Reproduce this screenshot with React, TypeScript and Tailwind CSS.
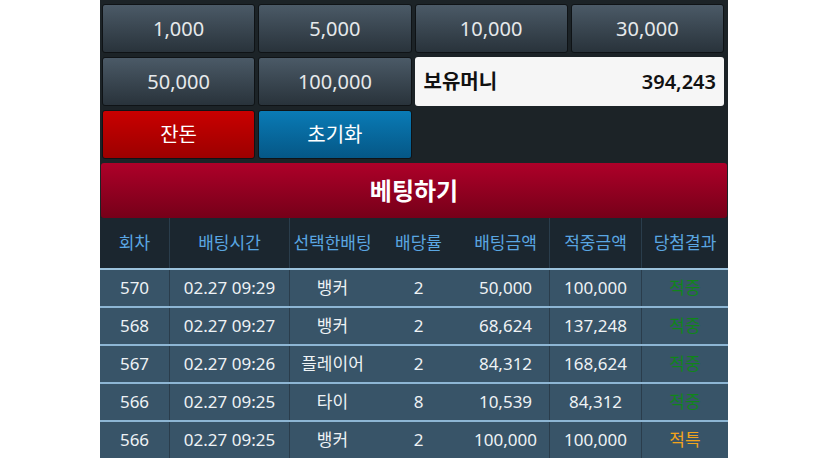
import React from "react";

type Row = {
  round: string;
  time: string;
  pick: string;
  odds: string;
  bet: string;
  win: string;
  result: string;
};

const amounts = ["1,000", "5,000", "10,000", "30,000", "50,000", "100,000"];

const rows: Row[] = [
  { round: "570", time: "02.27 09:29", pick: "뱅커", odds: "2", bet: "50,000", win: "100,000", result: "적중" },
  { round: "568", time: "02.27 09:27", pick: "뱅커", odds: "2", bet: "68,624", win: "137,248", result: "적중" },
  { round: "567", time: "02.27 09:26", pick: "플레이어", odds: "2", bet: "84,312", win: "168,624", result: "적중" },
  { round: "566", time: "02.27 09:25", pick: "타이", odds: "8", bet: "10,539", win: "84,312", result: "적중" },
  { round: "566", time: "02.27 09:25", pick: "뱅커", odds: "2", bet: "100,000", win: "100,000", result: "적특" },
];

const headers = ["회차", "배팅시간", "선택한배팅", "배당률", "배팅금액", "적중금액", "당첨결과"];

// column widths and which ones carry a faint divider on the right
const cols = [
  "w-[70px] border-r border-[#2a3d4c]",
  "w-[120px] border-r border-[#2a3d4c]",
  "w-[85px]",
  "w-[87px]",
  "w-[88px] border-r border-[#2a3d4c]",
  "w-[92px] border-r border-[#2a3d4c]",
  "w-[86px]",
];

const font = { fontFamily: '"Noto Sans", "Noto Sans CJK KR", sans-serif' };

const App = () => {
  return (
    <div className="w-full bg-white">
      <div className="w-[628px] h-[458px] mx-auto bg-[#1c2327] overflow-hidden" style={font}>
        <div className="grid grid-cols-4 gap-x-[3px] gap-y-[4px] pt-[4px] pl-[2px] pr-[4px]">
          {amounts.map(a => (
            <button
              key={a}
              className="h-[49px] rounded-[3px] border border-[#0f1316] bg-gradient-to-b from-[#4b5a67] to-[#29333b] text-[20px] text-[#e6e9eb]"
            >
              {a}
            </button>
          ))}
          <div className="col-span-2 h-[49px] rounded-[3px] bg-[#f6f6f6] flex items-center justify-between pl-[9px] pr-[8px] text-[20px] font-semibold text-[#111]">
            <span>보유머니</span>
            <span>394,243</span>
          </div>
          <button className="h-[49px] rounded-[3px] border border-[#0f1316] bg-gradient-to-b from-[#c90000] to-[#9c0000] text-[20px] text-white">
            잔돈
          </button>
          <button className="h-[49px] rounded-[3px] border border-[#0f1316] bg-gradient-to-b from-[#0a7bb6] to-[#055786] text-[20px] text-white">
            초기화
          </button>
        </div>

        <div className="mx-[1px] mt-[4px] h-[55px] rounded-[3px] bg-gradient-to-b from-[#ae0029] to-[#760019] flex items-center justify-center text-[24px] font-bold text-white">
          베팅하기
        </div>

        <div className="flex h-[52px] bg-[#1b262f] border-b-2 border-[#9cc2dc]">
          {headers.map((h, i) => (
            <div key={h} className={`${cols[i]} flex items-center justify-center text-[17px] text-[#5aa6e2]`}>
              {h}
            </div>
          ))}
        </div>

        {rows.map((r, idx) => {
          const cells = [r.round, r.time, r.pick, r.odds, r.bet, r.win, r.result];
          return (
            <div key={idx} className="flex h-[38px] bg-[#385468] border-b-2 border-[#8db6d4]">
              {cells.map((c, i) => (
                <div
                  key={i}
                  className={`${cols[i]} flex items-center justify-center text-[17px] ${
                    i === 6 ? (c === "적특" ? "text-[#f2a41c]" : "text-[#11851a]") : "text-[#eef2f5]"
                  }`}
                >
                  {c}
                </div>
              ))}
            </div>
          );
        })}
      </div>
    </div>
  );
};

export default App;
